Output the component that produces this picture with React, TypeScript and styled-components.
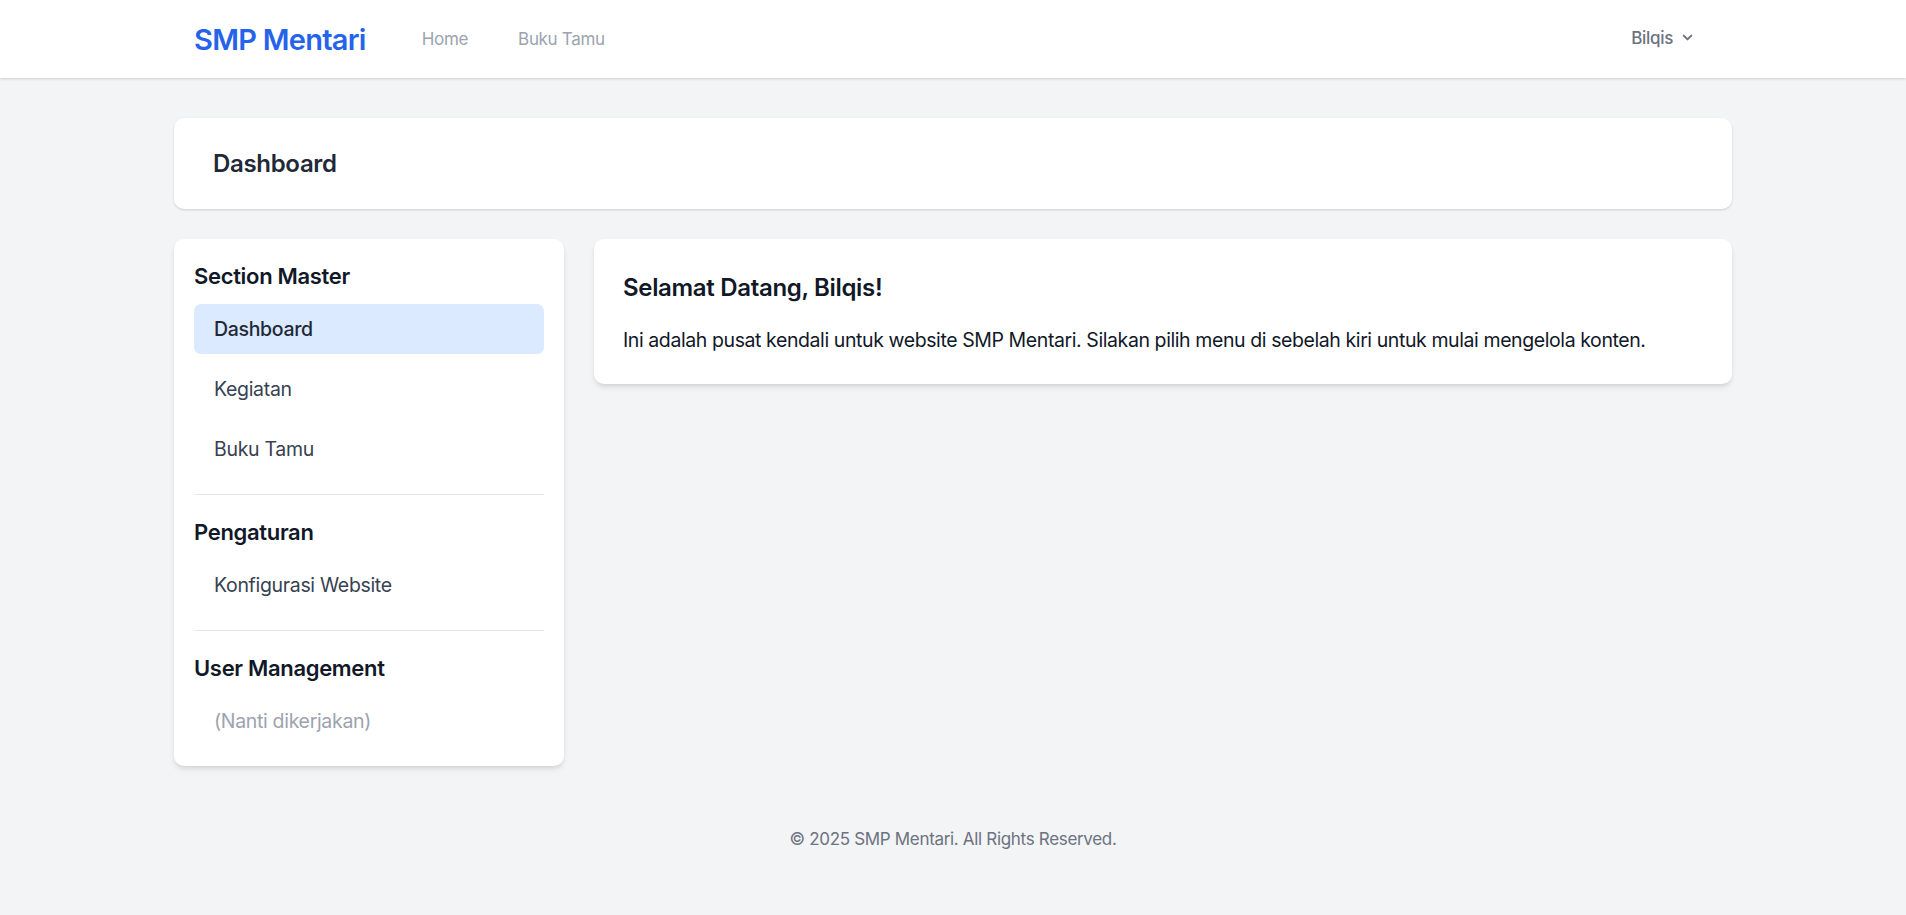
import styled, { createGlobalStyle, css } from "styled-components";

const GlobalStyle = createGlobalStyle`
  * {
    box-sizing: border-box;
  }
  body {
    margin: 0;
    background: #f3f4f6;
    font-family: Inter, "Liberation Sans", sans-serif;
    letter-spacing: -0.02em;
    color: #111827;
  }
`;

type Section = {
  title: string;
  items: { label: string; active?: boolean; muted?: boolean }[];
};

const sections: Section[] = [
  {
    title: "Section Master",
    items: [
      { label: "Dashboard", active: true },
      { label: "Kegiatan" },
      { label: "Buku Tamu" },
    ],
  },
  {
    title: "Pengaturan",
    items: [{ label: "Konfigurasi Website" }],
  },
  {
    title: "User Management",
    items: [{ label: "(Nanti dikerjakan)", muted: true }],
  },
];

const App = () => {
  return (
    <>
      <GlobalStyle />
      <Navbar>
        <NavInner>
          <NavLeft>
            <Logo>SMP Mentari</Logo>
            <NavLinks>
              <NavLink>Home</NavLink>
              <NavLink>Buku Tamu</NavLink>
            </NavLinks>
          </NavLeft>
          <UserButton>
            Bilqis
            <svg width="19" height="19" viewBox="0 0 20 20" fill="currentColor">
              <path
                fillRule="evenodd"
                d="M5.293 7.293a1 1 0 011.414 0L10 10.586l3.293-3.293a1 1 0 111.414 1.414l-4 4a1 1 0 01-1.414 0l-4-4a1 1 0 010-1.414z"
                clipRule="evenodd"
              />
            </svg>
          </UserButton>
        </NavInner>
      </Navbar>

      <Page>
        <HeaderCard>
          <PageTitle>Dashboard</PageTitle>
        </HeaderCard>

        <Content>
          <Sidebar>
            {sections.map((section, index) => (
              <SidebarSection key={section.title} first={index === 0}>
                <SectionTitle>{section.title}</SectionTitle>
                <MenuList>
                  {section.items.map((item) => (
                    <MenuItem
                      key={item.label}
                      active={item.active}
                      muted={item.muted}
                    >
                      {item.label}
                    </MenuItem>
                  ))}
                </MenuList>
              </SidebarSection>
            ))}
          </Sidebar>

          <MainCard>
            <Welcome>Selamat Datang, Bilqis!</Welcome>
            <Intro>
              Ini adalah pusat kendali untuk website SMP Mentari. Silakan pilih
              menu di sebelah kiri untuk mulai mengelola konten.
            </Intro>
          </MainCard>
        </Content>
      </Page>

      <Footer>© 2025 SMP Mentari. All Rights Reserved.</Footer>
    </>
  );
};

export default App;

const Navbar = styled.nav`
  height: 78px;
  background: #ffffff;
  box-shadow: 0 1px 3px rgba(0, 0, 0, 0.1), 0 1px 2px rgba(0, 0, 0, 0.06);
`;

const NavInner = styled.div`
  max-width: 1558px;
  height: 100%;
  margin: 0 auto;
  padding: 0 20px;
  display: flex;
  align-items: center;
  justify-content: space-between;
`;

const NavLeft = styled.div`
  display: flex;
  align-items: center;
`;

const Logo = styled.div`
  color: #2563eb;
  font-size: 29px;
  font-weight: 600;
  letter-spacing: -0.025em;
  line-height: 1;
`;

const NavLinks = styled.div`
  display: flex;
  align-items: center;
  gap: 50px;
  margin-left: 56px;
`;

const NavLink = styled.a`
  color: #9ca3af;
  font-size: 17px;
  font-weight: 400;
  text-decoration: none;
`;

const UserButton = styled.button`
  display: flex;
  align-items: center;
  gap: 5px;
  padding: 0 15px;
  margin-top: -3px;
  border: none;
  background: transparent;
  color: #6b7280;
  font-family: inherit;
  letter-spacing: inherit;
  font-size: 17px;
  font-weight: 500;
`;

const Page = styled.main`
  max-width: 1558px;
  margin: 0 auto;
  padding-top: 40px;
`;

const Card = css`
  background: #ffffff;
  border-radius: 10px;
  box-shadow: 0 1px 3px rgba(0, 0, 0, 0.1), 0 1px 2px rgba(0, 0, 0, 0.06);
`;

const HeaderCard = styled.header`
  ${Card};
  padding: 29px 39px 28px;
`;

const PageTitle = styled.h2`
  margin: 0;
  color: #1f2937;
  font-size: 24px;
  font-weight: 600;
  line-height: 34px;
`;

const Content = styled.div`
  display: flex;
  align-items: flex-start;
  gap: 30px;
  margin-top: 30px;
`;

const Sidebar = styled.aside`
  ${Card};
  width: 390px;
  flex-shrink: 0;
  padding: 23px 20px 20px;
  box-shadow: 0 4px 6px -1px rgba(0, 0, 0, 0.1), 0 2px 4px -1px rgba(0, 0, 0, 0.06);
`;

const SidebarSection = styled.div<{ first?: boolean }>`
  ${({ first }) =>
    !first &&
    css`
      margin-top: 20px;
      padding-top: 23px;
      border-top: 1px solid #e5e7eb;
    `}
`;

const SectionTitle = styled.h3`
  margin: 0 0 13px;
  color: #111827;
  font-size: 22px;
  font-weight: 600;
  line-height: 29px;
`;

const MenuList = styled.div`
  display: flex;
  flex-direction: column;
  gap: 10px;
`;

const MenuItem = styled.a<{ active?: boolean; muted?: boolean }>`
  display: flex;
  align-items: center;
  height: 50px;
  padding: 0 20px;
  border-radius: 7px;
  font-size: 19.5px;
  color: ${({ muted }) => (muted ? "#9ca3af" : "#374151")};
  ${({ active }) =>
    active &&
    css`
      background: #dbeafe;
      color: #1f2937;
      font-weight: 500;
    `}
`;

const MainCard = styled.section`
  ${Card};
  flex: 1;
  padding: 32px 29px 29px;
  box-shadow: 0 4px 6px -1px rgba(0, 0, 0, 0.1), 0 2px 4px -1px rgba(0, 0, 0, 0.06);
`;

const Welcome = styled.h3`
  margin: 0 0 21px;
  color: #111827;
  font-size: 24px;
  font-weight: 600;
  line-height: 34px;
`;

const Intro = styled.p`
  margin: 0;
  color: #111827;
  font-size: 19.5px;
  letter-spacing: -0.021em;
  line-height: 29px;
`;

const Footer = styled.footer`
  padding: 61px 0 40px;
  text-align: center;
  color: #6b7280;
  font-size: 17px;
  line-height: 24px;
`;
